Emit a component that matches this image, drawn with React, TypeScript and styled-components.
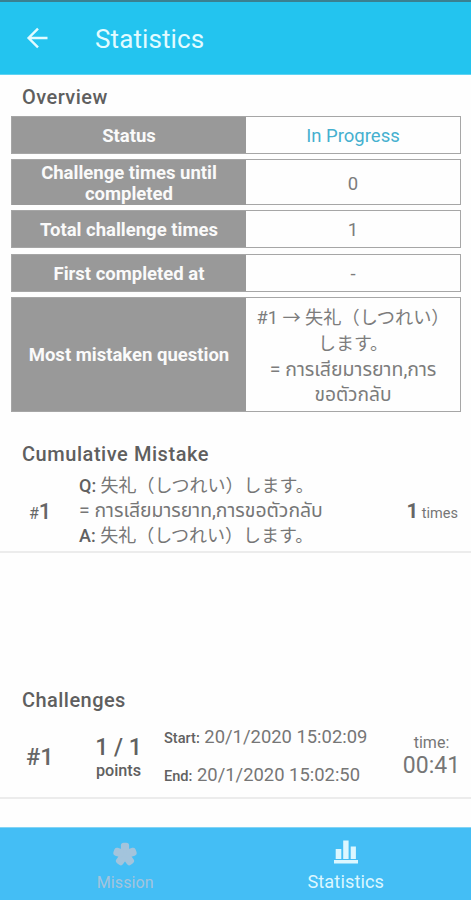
import React from "react";
import styled, { createGlobalStyle } from "styled-components";

const Global = createGlobalStyle`
  * { box-sizing: border-box; }
  body {
    margin: 0;
    background: #fefefe;
    color: #767676;
    font-family: Roboto, "Noto Sans CJK JP", "Noto Sans Thai", "Noto Sans", sans-serif;
  }
`;

const Screen = styled.div`
  width: 471px;
  height: 900px;
  display: flex;
  flex-direction: column;
  overflow: hidden;
`;

const AppBar = styled.header`
  flex: none;
  height: 75px;
  border-top: 2px solid #3a8091;
  border-bottom: 1px solid #5fd3f2;
  background: #23c4ef;
  display: flex;
  align-items: center;
  padding: 2px 0 0 26px;
  gap: 47px;
  color: #e2fbff;
`;

const BackIcon = styled.svg`
  width: 22px;
  height: 22px;
  display: block;
  margin-top: -2px;
`;

const Title = styled.h1`
  margin: 0;
  font-size: 26px;
  line-height: 30px;
  font-weight: 400;
  letter-spacing: 0.1px;
`;

const Heading = styled.h2<{ $height: number; $spacing?: number }>`
  flex: none;
  margin: 0;
  height: ${(p) => p.$height}px;
  padding-left: 22px;
  font-size: 20px;
  line-height: 24px;
  font-weight: 500;
  letter-spacing: ${(p) => p.$spacing ?? 0.45}px;
  color: #5f5f5f;
`;

const Overview = styled.section`
  flex: none;
  height: 367px;
  padding-top: 10px;
`;

const Table = styled.div`
  margin: 0 10px 0 11px;
  display: grid;
  grid-template-rows: 38px 46px 38px 38px 115px;
  row-gap: 5.2px;
`;

const Row = styled.div`
  display: grid;
  grid-template-columns: 234px 1fr;
  border: 1px solid #a6a6a6;
`;

const Label = styled.div`
  display: flex;
  align-items: center;
  justify-content: center;
  padding: 3px 14px 0;
  background: #999;
  color: #fafafa;
  font-size: 18.5px;
  line-height: 21px;
  font-weight: 700;
  text-align: center;
`;

const Value = styled.div<{ $accent?: boolean }>`
  display: flex;
  flex-direction: column;
  align-items: center;
  justify-content: center;
  padding-top: 2px;
  font-size: 18.5px;
  line-height: 22px;
  color: ${(p) => (p.$accent ? "#45b0cf" : "#7c7c7c")};
`;

const Line = styled.span<{ $size?: number; $height?: number; $spacing?: number }>`
  display: block;
  white-space: nowrap;
  font-size: ${(p) => p.$size ?? 18}px;
  line-height: ${(p) => p.$height ?? 25}px;
  letter-spacing: ${(p) => p.$spacing ?? 0}px;
`;

const Mistakes = styled.section`
  flex: none;
  height: 246px;
`;

const MistakeRow = styled.div`
  height: 81px;
  border-bottom: 2px solid #ececec;
  display: grid;
  grid-template-columns: 79px 1fr auto;
  align-items: center;
  padding: 0 13px 2px 0;
`;

const Rank = styled.div`
  padding: 4px 0 0 29px;
  font-size: 22px;
  line-height: 26px;
  font-weight: 500;
  color: #666;
`;

const Small = styled.span<{ $size: number; $weight?: number }>`
  font-size: ${(p) => p.$size}px;
  font-weight: ${(p) => p.$weight ?? 400};
`;

const Strong = styled.b`
  font-weight: 500;
  color: #616161;
`;

const Count = styled.div`
  padding-top: 3px;
  font-size: 14.5px;
  line-height: 26px;
  b {
    font-size: 20.5px;
    font-weight: 700;
    color: #666;
  }
`;

const Challenges = styled.section`
  flex: 1;
`;

const ChallengeRow = styled.div`
  height: 86px;
  border-bottom: 2px solid #ececec;
  display: grid;
  grid-template-columns: 79px 79px 1fr 79px;
  align-items: center;
`;

const Index = styled.div`
  padding: 3px 0 0 26px;
  font-size: 23.5px;
  line-height: 28px;
  font-weight: 500;
  color: #666;
`;

const Score = styled.div`
  padding-top: 5px;
  text-align: center;
  font-weight: 500;
  color: #606060;
`;

const Times = styled.div`
  padding: 3px 0 0 6px;
  display: flex;
  flex-direction: column;
  gap: 13px;
`;

const Duration = styled.div`
  padding-top: 2px;
  display: flex;
  flex-direction: column;
  align-items: center;
`;

const TabBar = styled.nav`
  flex: none;
  height: 73px;
  border-top: 1px solid #83d4f5;
  background: #44bef5;
  display: grid;
  grid-template-columns: 1fr 1fr;
  padding: 0 15px;
`;

const Tab = styled.div<{ $active?: boolean }>`
  display: flex;
  flex-direction: column;
  align-items: center;
  padding-top: ${(p) => (p.$active ? 12 : 14)}px;
  gap: ${(p) => (p.$active ? 7 : 6)}px;
  color: ${(p) => (p.$active ? "#dcf7ff" : "#a3c4dc")};
  font-size: ${(p) => (p.$active ? 18.2 : 16)}px;
  line-height: 22px;
  letter-spacing: ${(p) => (p.$active ? 0.1 : 0.1)}px;
  svg {
    display: block;
    width: 24px;
    height: 24px;
  }
`;

const PETALS = [0, 72, 144, 216, 288];

export default function App() {
  return (
    <>
      <Global />
      <Screen>
        <AppBar>
          <BackIcon viewBox="0 0 22 22" fill="none" stroke="currentColor" strokeWidth="2.4">
            <path d="M21.5 11H3M12 1.6L2.6 11L12 20.4" />
          </BackIcon>
          <Title>Statistics</Title>
        </AppBar>

        <Overview>
          <Heading $height={31}>Overview</Heading>
          <Table>
            <Row>
              <Label>Status</Label>
              <Value $accent>In Progress</Value>
            </Row>
            <Row>
              <Label>Challenge times until completed</Label>
              <Value>0</Value>
            </Row>
            <Row>
              <Label>Total challenge times</Label>
              <Value>1</Value>
            </Row>
            <Row>
              <Label>First completed at</Label>
              <Value>-</Value>
            </Row>
            <Row>
              <Label>Most mistaken question</Label>
              <Value>
                <Line $height={27} $size={18.2}>#1 → 失礼（しつれい）</Line>
                <Line $height={26}>します。</Line>
                <Line $size={19.5}>= การเสียมารยาท,การ</Line>
                <Line $size={19.2}>ขอตัวกลับ</Line>
              </Value>
            </Row>
          </Table>
        </Overview>

        <Mistakes>
          <Heading $height={30} $spacing={0.55}>
            Cumulative Mistake
          </Heading>
          <MistakeRow>
            <Rank>
              <Small $size={16}>#</Small>1
            </Rank>
            <div>
              <Line>
                <Strong>Q:</Strong> 失礼（しつれい）します。
              </Line>
              <Line $size={19.4}>= การเสียมารยาท,การขอตัวกลับ</Line>
              <Line>
                <Strong>A:</Strong> 失礼（しつれい）します。
              </Line>
            </div>
            <Count>
              <b>1</b> times
            </Count>
          </MistakeRow>
        </Mistakes>

        <Challenges>
          <Heading $height={25}>Challenges</Heading>
          <ChallengeRow>
            <Index>#1</Index>
            <Score>
              <Line $size={23} $height={26}>1 / 1</Line>
              <Line $size={16.2} $height={20}>points</Line>
            </Score>
            <Times>
              <Line $height={24} $size={18.4}>
                <Small as={Strong} $size={14.6}>Start:</Small> 20/1/2020 15:02:09
              </Line>
              <Line $height={24} $size={18.4}>
                <Small as={Strong} $size={14.6}>End:</Small> 20/1/2020 15:02:50
              </Line>
            </Times>
            <Duration>
              <Line $size={16} $height={20}>time:</Line>
              <Line $size={23} $height={26}>00:41</Line>
            </Duration>
          </ChallengeRow>
        </Challenges>

        <TabBar>
          <Tab>
            <svg viewBox="0 0 24 24" fill="currentColor">
              <circle cx="12" cy="12.5" r="6" />
              {PETALS.map((angle) => (
                <rect
                  key={angle}
                  x="7.9"
                  y="0.8"
                  width="8.2"
                  height="10"
                  rx="2.8"
                  transform={`rotate(${angle} 12 12.5)`}
                />
              ))}
            </svg>
            Mission
          </Tab>
          <Tab $active>
            <svg viewBox="0 0 24 24" fill="currentColor">
              <path d="M0 20h24v3.5H0zM1.7 9h5.6v10H1.7zM9.2 0.5h5.4v18.5h-5.4zM16.7 6.5h5.2v12.5h-5.2z" />
            </svg>
            Statistics
          </Tab>
        </TabBar>
      </Screen>
    </>
  );
}
